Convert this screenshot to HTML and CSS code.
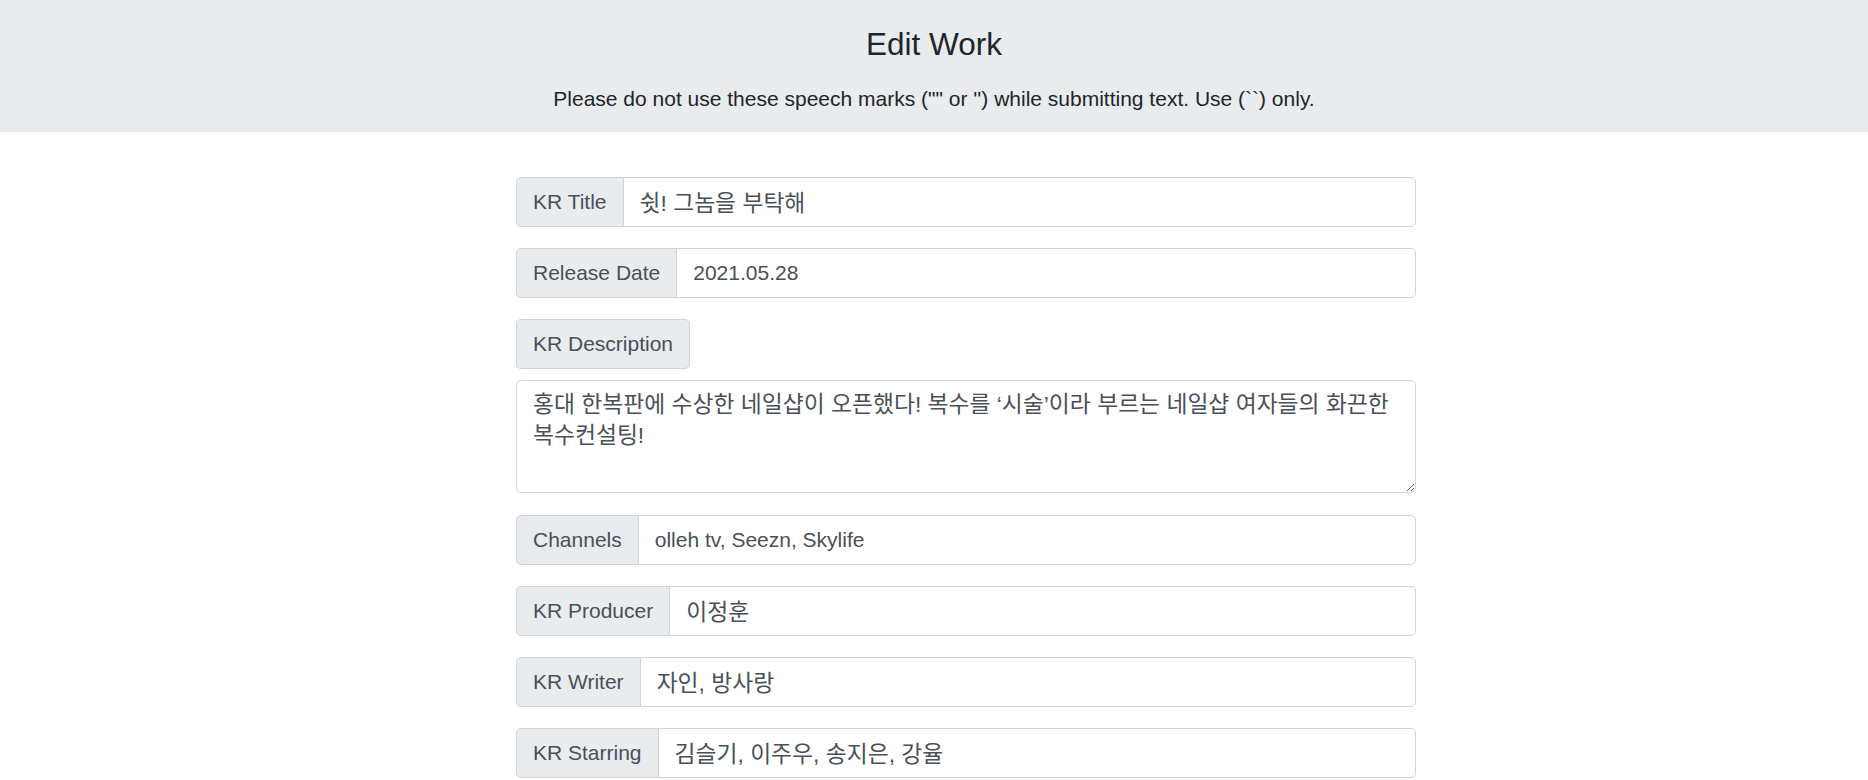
FILE: index.html
```html
<!DOCTYPE html>
<html lang="en">
<head>
<meta charset="utf-8">
<title>Edit Work</title>
<link rel="stylesheet" href="styles.css">
</head>
<body>
<header class="banner">
  <h4 class="banner-title">Edit Work</h4>
  <p class="banner-note">Please do not use these speech marks ("" or '') while submitting text. Use (``) only.</p>
</header>
<main class="form-wrap">
  <form class="form">
    <div class="group">
      <span class="group-label">KR Title</span>
      <input class="group-input ko" type="text" value="쉿! 그놈을 부탁해">
    </div>
    <div class="group">
      <span class="group-label">Release Date</span>
      <input class="group-input" type="text" value="2021.05.28">
    </div>
    <div class="desc-head">
      <span class="group-label solo">KR Description</span>
    </div>
    <textarea class="desc ko" rows="3">홍대 한복판에 수상한 네일샵이 오픈했다! 복수를 ‘시술’이라 부르는 네일샵 여자들의 화끈한 복수컨설팅!</textarea>
    <div class="group">
      <span class="group-label">Channels</span>
      <input class="group-input" type="text" value="olleh tv, Seezn, Skylife">
    </div>
    <div class="group">
      <span class="group-label">KR Producer</span>
      <input class="group-input ko" type="text" value="이정훈">
    </div>
    <div class="group">
      <span class="group-label">KR Writer</span>
      <input class="group-input ko" type="text" value="자인, 방사랑">
    </div>
    <div class="group">
      <span class="group-label">KR Starring</span>
      <input class="group-input ko" type="text" value="김슬기, 이주우, 송지은, 강율">
    </div>
  </form>
</main>
</body>
</html>
```

FILE: styles.css
```css
html, body {
  margin: 0;
  padding: 0;
  background: #ffffff;
}
body {
  font-family: "Liberation Sans", "Noto Sans CJK KR", Arial, sans-serif;
  font-size: 21px;
  line-height: 1.5;
  color: #212529;
}
.banner {
  background: #e9ecef;
  text-align: center;
  padding: 26px 0 17.5px;
}
.banner-title {
  margin: 0 0 19.2px;
  font-size: 31.5px;
  font-weight: 400;
  line-height: 1.2;
  color: #212529;
}
.banner-note {
  margin: 0;
  font-size: 21px;
  line-height: 1.5;
  color: #212529;
}
.form-wrap {
  width: 964px;
  margin: 45px auto 0;
  padding-left: 64px;
  box-sizing: border-box;
}
.form {
  display: flex;
  flex-direction: column;
}
.group {
  display: flex;
  align-items: stretch;
  height: 50px;
  margin-bottom: 21px;
}
.group-label {
  display: flex;
  align-items: center;
  box-sizing: border-box;
  padding: 0 16px;
  background: #e9ecef;
  border: 1px solid #ced4da;
  border-radius: 5px 0 0 5px;
  color: #495057;
  white-space: nowrap;
  font-size: 21px;
}
.group-label.solo {
  border-radius: 5px;
  height: 50px;
}
.group-input {
  flex: 1;
  min-width: 0;
  box-sizing: border-box;
  margin: 0 0 0 -1px;
  padding: 0 16px;
  border: 1px solid #ced4da;
  border-radius: 0 5px 5px 0;
  background: #ffffff;
  color: #495057;
  font-family: inherit;
  font-size: 21px;
  outline: none;
}
.desc-head {
  display: flex;
  margin-bottom: 11.5px;
}
.desc {
  display: block;
  box-sizing: border-box;
  width: 100%;
  height: 113px;
  margin: 0 0 21.5px;
  padding: 7.5px 16px;
  border: 1px solid #ced4da;
  border-radius: 5px;
  background: #ffffff;
  color: #495057;
  font-family: inherit;
  font-size: 21px;
  line-height: 31.5px;
  resize: vertical;
  outline: none;
}
.ko {
  font-size: 22.8px;
}
```
